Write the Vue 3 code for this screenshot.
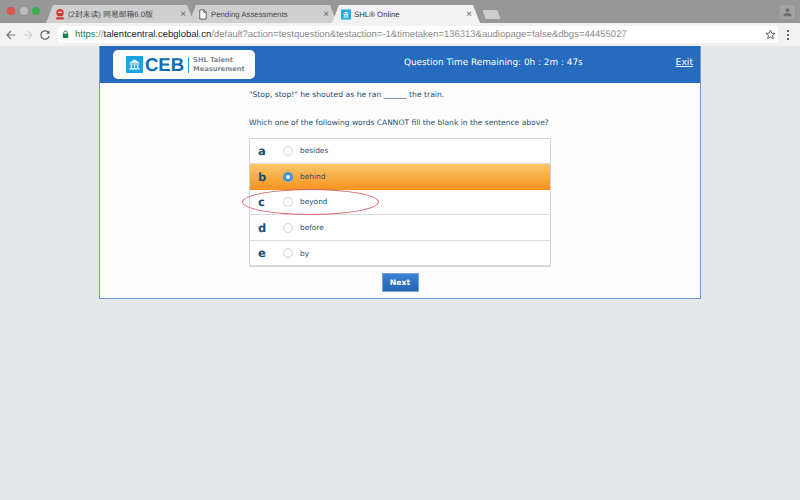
<template>
  <div class="browser">
    <div class="tabstrip">
      <div class="lights">
        <span class="light red"></span>
        <span class="light grey"></span>
        <span class="light green"></span>
      </div>
      <div class="tabs">
        <div v-for="tab in tabs" :key="tab.title" class="tab" :class="{ active: tab.active }">
          <svg v-if="tab.icon === 'mail'" class="favicon" viewBox="0 0 10 12">
            <circle cx="5" cy="4" r="4" fill="#d9302c" />
            <rect x="3" y="3" width="4" height="1.4" fill="#fff" />
            <rect x="1" y="9" width="8" height="2.4" fill="#d9302c" />
          </svg>
          <svg v-else-if="tab.icon === 'doc'" class="favicon" viewBox="0 0 10 12">
            <path d="M1.5 1h4.5l2.5 2.5V11h-7z M6 1v2.5h2.5" fill="#fff" stroke="#555" stroke-width="1" />
          </svg>
          <svg v-else class="favicon" viewBox="0 0 10 10">
            <rect width="10" height="10" fill="#21a9e1" />
            <path d="M2 4 5 2l3 2zM2.5 4.6h5v.7h-5zM3 5.4h.8v1.6H3zM4.6 5.4h.8v1.6h-.8zM6.2 5.4H7v1.6h-.8zM2.3 7.2h5.4V8H2.3z" fill="#fff" />
          </svg>
          <span class="tab-title">{{ tab.title }}</span>
          <span class="tab-close">×</span>
        </div>
        <div class="new-tab"></div>
      </div>
      <div class="profile">
        <svg viewBox="0 0 12 12" width="11" height="11">
          <circle cx="6" cy="3.6" r="2.2" fill="#6f6f6f" />
          <path d="M1.5 10c0-2.4 2-3.4 4.500-3.400s4.500 1 4.500 3.400z" fill="#6f6f6f" />
        </svg>
      </div>
    </div>

    <div class="toolbar">
      <svg class="nav" viewBox="0 0 12 12">
        <path d="M10.500 6H2M6 2 2 6l4 4" fill="none" stroke="#777" stroke-width="1.200" />
      </svg>
      <svg class="nav" viewBox="0 0 12 12">
        <path d="M1.500 6H10M6 2l4 4-4 4" fill="none" stroke="#d2d2d2" stroke-width="1.200" />
      </svg>
      <svg class="nav" viewBox="0 0 12 12">
        <path d="M9.800 4a4.200 4.200 0 1 0 .4 3" fill="none" stroke="#666" stroke-width="1.200" />
        <path d="M10.500 1.200v3.500H7z" fill="#666" />
      </svg>
      <div class="omnibox">
        <svg class="lock" viewBox="0 0 8 10">
          <path d="M2 4.500V3a2 2 0 0 1 4 0v1.500" fill="none" stroke="#17804f" stroke-width="1.100" />
          <rect x="1" y="4.200" width="6" height="4.800" rx=".6" fill="#17804f" />
        </svg>
        <span class="url"><span class="scheme">https:</span><span class="muted">//</span><span class="host">talentcentral.cebglobal.cn</span><span class="muted">/default?action=testquestion&amp;testaction=-1&amp;timetaken=136313&amp;audiopage=false&amp;dbgs=44455027</span></span>
        <svg class="star" viewBox="0 0 12 12">
          <path d="M6 1.200 7.400 4.500l3.600.3-2.700 2.300.8 3.500L6 8.700l-3.100 1.900.8-3.500L1 4.800l3.600-.3z" fill="none" stroke="#555" stroke-width="1" />
        </svg>
      </div>
      <div class="menu-dots"><i></i><i></i><i></i></div>
    </div>

    <div class="page">
      <div class="panel">
        <header class="panel-head">
          <div class="logo">
            <svg class="logo-mark" viewBox="0 0 16 16">
              <rect width="16" height="16" fill="#1ba6e0" />
              <path d="M3 6.300 8 3.200l5 3.100zM3.600 7h8.800v1H3.600zM4.400 8.400h1.300v2.700H4.400zM7.350 8.400h1.300v2.700h-1.300zM10.300 8.400h1.300v2.700h-1.300zM3.200 11.500h9.600v1.200H3.200z" fill="#fff" />
            </svg>
            <span class="logo-name">CEB</span>
            <span class="logo-sub">SHL Talent<br />Measurement</span>
          </div>
          <div class="timer">Question Time Remaining: 0h : 2m : 47s</div>
          <a class="exit" href="#">Exit</a>
        </header>

        <div class="question">
          <p class="stem">"Stop, stop!" he shouted as he ran ______ the train.</p>
          <p class="prompt">Which one of the following words CANNOT fill the blank in the sentence above?</p>
          <div class="options">
            <div v-for="opt in options" :key="opt.key" class="option" :class="{ selected: opt.key === selected }">
              <span class="opt-key">{{ opt.key }}</span>
              <span class="radio"></span>
              <span class="opt-label">{{ opt.label }}</span>
            </div>
            <div class="annotation"></div>
          </div>
          <button class="next" type="button">Next</button>
        </div>
      </div>
    </div>
  </div>
</template>

<script setup>
const tabs = [
  { title: '(2封未读) 网易邮箱6.0版', icon: 'mail' },
  { title: 'Pending Assessments', icon: 'doc' },
  { title: 'SHL® Online', icon: 'shl', active: true }
]

const options = [
  { key: 'a', label: 'besides' },
  { key: 'b', label: 'behind' },
  { key: 'c', label: 'beyond' },
  { key: 'd', label: 'before' },
  { key: 'e', label: 'by' }
]

const selected = 'b'
</script>

<style>
html, body {
  margin: 0;
  background: #e6e7e9;
}
</style>

<style scoped>
.browser {
  width: 800px;
  height: 500px;
  overflow: hidden;
  font-family: 'DejaVu Sans', Verdana, sans-serif;
  text-rendering: geometricPrecision;
  background: #e6e7e9;
}

.tabstrip {
  height: 23px;
  display: flex;
  background: #979797;
}

.lights {
  width: 46px;
  flex: none;
  display: flex;
  gap: 4.500px;
  padding: 7px 0 0 7px;
  box-sizing: border-box;
}

.light {
  width: 8px;
  height: 8px;
  border-radius: 50%;
}

.light.red { background: #e0514d; }
.light.grey { background: #bcbcbc; }
.light.green { background: #3cae4c; }

.tabs {
  display: flex;
  flex: 1;
  padding-top: 5px;
}

.tab {
  width: 148px;
  margin-right: -5px;
  height: 18px;
  display: flex;
  align-items: center;
  gap: 3px;
  padding: 0 8px 0 9px;
  box-sizing: border-box;
  background: #cfcfcf;
  clip-path: polygon(0 100%, 7px 0, calc(100% - 7px) 0, 100% 100%);
  font-family: 'Liberation Sans', 'Noto Sans CJK SC', sans-serif;
  font-size: 7.800px;
  color: #4a4a4a;
}

.tab.active {
  background: #f2f2f2;
  color: #333;
}

.favicon {
  width: 10px;
  height: 11px;
  flex: none;
}

.tab-title {
  flex: 1;
  white-space: nowrap;
  overflow: hidden;
}

.tab-close {
  font-size: 10px;
  color: #666;
}

.new-tab {
  width: 15px;
  height: 9px;
  margin: 5px 0 0 9px;
  background: #cdcdcd;
  transform: skewX(20deg);
  border-radius: 1px;
}

.profile {
  width: 15px;
  height: 14px;
  margin: 5px 5px 0 0;
  background: #a3a3a3;
  display: flex;
  align-items: center;
  justify-content: center;
  border-radius: 2px;
}

.toolbar {
  height: 23px;
  display: flex;
  align-items: center;
  gap: 5px;
  padding: 0 5px;
  box-sizing: border-box;
  background: #f2f2f2;
}

.nav {
  width: 12px;
  height: 12px;
  flex: none;
}

.omnibox {
  width: 720px;
  height: 17px;
  flex: none;
  margin-left: 2px;
  display: flex;
  align-items: center;
  padding: 0 2px 0 4px;
  box-sizing: border-box;
  background: #fff;
  border-radius: 3px;
}

.lock {
  width: 7px;
  height: 9px;
  flex: none;
}

.url {
  flex: 1;
  margin-left: 6px;
  font-family: 'Liberation Sans', sans-serif;
  font-size: 9.500px;
  white-space: nowrap;
  color: #8a8a8a;
}

.scheme { color: #17804f; }
.muted { color: #8a8a8a; }
.host { color: #222; }

.star {
  width: 11px;
  height: 11px;
  flex: none;
}

.menu-dots {
  display: flex;
  flex-direction: column;
  gap: 2px;
  margin-left: 4px;
}

.menu-dots i {
  width: 2px;
  height: 2px;
  background: #666;
}

.page {
  padding-left: 99px;
}

.panel {
  width: 602px;
  height: 253px;
  box-sizing: border-box;
  background: #fdfdfd;
  border: 1px solid #6f9bd0;
  border-top: 0;
}

.panel-head {
  height: 37px;
  display: flex;
  align-items: center;
  padding: 0 7px 0 13px;
  background: #266bbd;
  color: #fff;
}

.logo {
  width: 142px;
  height: 29px;
  display: flex;
  align-items: center;
  flex: none;
  padding-left: 13px;
  box-sizing: border-box;
  background: #fff;
  border-radius: 5px;
}

.logo-mark {
  width: 17px;
  height: 17px;
  flex: none;
}

.logo-name {
  margin-left: 2px;
  padding-right: 4px;
  font-family: 'Liberation Sans', sans-serif;
  font-size: 18.500px;
  font-weight: 700;
  color: #0f6cb4;
  border-right: 1px solid #1ba6e0;
  line-height: 16px;
}

.logo-sub {
  margin-left: 4px;
  font-size: 6.700px;
  font-weight: 700;
  line-height: 9px;
  color: #7b8a94;
}

.timer {
  flex: 1;
  padding: 0 0 3px 56px;
  text-align: center;
  font-size: 8.900px;
}

.exit {
  padding-bottom: 5px;
  color: #fff;
  font-size: 9.200px;
}

.question {
  width: 302px;
  margin: 0 auto;
  color: #1f4d6e;
  font-size: 7.650px;
}

.stem {
  margin: 0;
  padding-top: 6px;
  line-height: 11px;
}

.prompt {
  margin: 17px 0 0;
  font-size: 7.550px;
  line-height: 11px;
  white-space: nowrap;
}

.options {
  position: relative;
  margin-top: 9.500px;
  background: #fff;
  border: 1px solid #d5d5d5;
}

.option {
  height: 25.600px;
  display: flex;
  align-items: center;
  box-sizing: border-box;
  padding-left: 8px;
  border-bottom: 1px solid #dcdcdc;
}

.option:last-of-type {
  border-bottom: 0;
}

.option.selected {
  background: linear-gradient(#fbc86a, #f7921e);
  border-bottom: 0;
}

.opt-key {
  width: 25px;
  font-size: 11.500px;
  font-weight: 700;
  color: #1b4f72;
}

.radio {
  width: 10px;
  height: 10px;
  flex: none;
  box-sizing: border-box;
  border: 1px solid #d5d5d5;
  border-radius: 50%;
  background: #fff;
}

.option.selected .radio {
  border: 3px solid #3f94e4;
}

.opt-label {
  margin-left: 7px;
  font-size: 7.400px;
}

.annotation {
  position: absolute;
  left: -8px;
  top: 50.500px;
  width: 135px;
  height: 24px;
  border: 1px solid #d9696a;
  border-radius: 50%;
}

.next {
  display: block;
  width: 37px;
  height: 19px;
  margin: 5.500px auto 0;
  padding: 0;
  border: 1px solid #7ba7d8;
  background: linear-gradient(#3a80d2, #2565b4);
  color: #fff;
  font-family: inherit;
  font-size: 7.700px;
  font-weight: 700;
}
</style>
